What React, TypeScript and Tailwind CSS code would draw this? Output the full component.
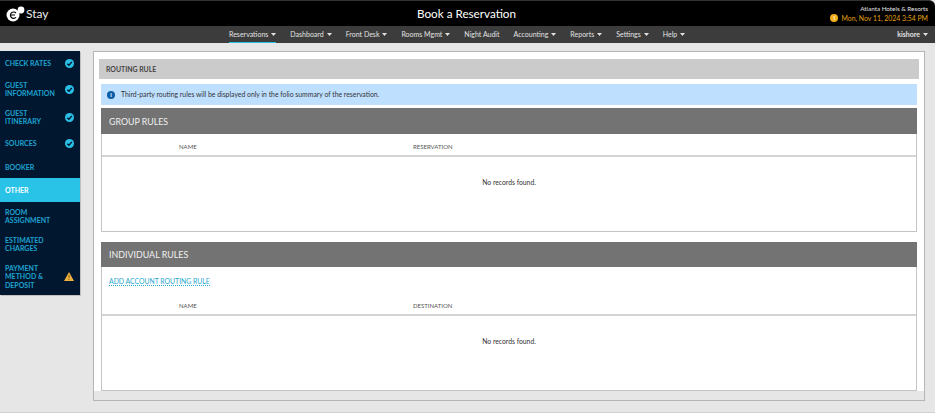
import React from 'react';

const navItems = [
    { label: 'Reservations', caret: true, active: true },
    { label: 'Dashboard', caret: true },
    { label: 'Front Desk', caret: true },
    { label: 'Rooms Mgmt', caret: true },
    { label: 'Night Audit', caret: false },
    { label: 'Accounting', caret: true },
    { label: 'Reports', caret: true },
    { label: 'Settings', caret: true },
    { label: 'Help', caret: true },
];

const sideItems = [
    { lines: ['CHECK RATES'], h: 'h-[24px]', icon: 'check' },
    { lines: ['GUEST', 'INFORMATION'], h: 'h-[28px]', icon: 'check' },
    { lines: ['GUEST', 'ITINERARY'], h: 'h-[28px]', icon: 'check' },
    { lines: ['SOURCES'], h: 'h-[24px]', icon: 'check' },
    { lines: ['BOOKER'], h: 'h-[23px] pt-[2px]' },
    { lines: ['OTHER'], h: 'h-[24px]', active: true },
    { lines: ['ROOM', 'ASSIGNMENT'], h: 'h-[28px]' },
    { lines: ['ESTIMATED', 'CHARGES'], h: 'h-[28px]' },
    { lines: ['PAYMENT', 'METHOD &', 'DEPOSIT'], h: 'h-[37px]', icon: 'warn' },
];

const Caret = () => (
    <svg width="5" height="3" viewBox="0 0 5 3" className="ml-[3px] inline-block align-middle">
        <path d="M0 0h5L2.5 3z" fill="currentColor" />
    </svg>
);

const CheckIcon = () => (
    <svg width="9" height="9" viewBox="0 0 10 10">
        <circle cx="5" cy="5" r="5" fill="#29bfe6" />
        <path d="M2.6 5.2 4.4 7l3.2-3.8" fill="none" stroke="#00152e" strokeWidth="1.5" />
    </svg>
);

const WarnIcon = () => (
    <svg width="10" height="9" viewBox="0 0 10 9">
        <path d="M5 0 10 9H0z" fill="#f0b13c" />
        <path d="M5 3v3M5 7v1" stroke="#5c4210" strokeWidth="0.8" />
    </svg>
);

const Logo = () => (
    <svg width="22" height="18" viewBox="0 0 22 18">
        <circle cx="8" cy="10" r="6.5" fill="#fff" />
        <path d="M11 8a3.2 3.2 0 1 0 0 4.4M5.5 10H10" fill="none" stroke="#000" strokeWidth="1.2" />
        <circle cx="16" cy="5" r="3.4" fill="#fff" />
    </svg>
);

const RulesTable = ({ second }: { second: string }) => (
    <div className="flex h-[23px] items-center border-b-2 border-[#d4d4d4] pt-[3px] text-[6px] text-[#555]">
        <span className="ml-[77px] w-[234px]">NAME</span>
        <span>{second}</span>
    </div>
);

export default function App() {
    return (
        <div className="flex h-[413px] w-[935px] flex-col overflow-hidden border-b border-[#cfcfcf] bg-[#e6e6e6] font-['Lato',sans-serif]">
            <header className="flex h-[26px] shrink-0 items-center rounded-tr-[6px] border-t border-[#333] bg-black pl-[5px] pr-[7px]">
                <div className="flex flex-1 items-center">
                    <Logo />
                    <span className="ml-[-1px] mt-[1px] text-[12px] text-[#ececec]">Stay</span>
                </div>
                <div className="text-[11.7px] leading-[17px] text-white">Book a Reservation</div>
                <div className="flex flex-1 flex-col items-end">
                    <span className="text-[6.3px] leading-[8px] text-[#e5e5e5]">Atlanta Hotels &amp; Resorts</span>
                    <div className="flex items-center text-[6.9px] leading-[10px] text-[#e0a010]">
                        <span className="mr-[3px] flex h-[8px] w-[8px] items-center justify-center rounded-full bg-[#f2ae1c] text-[6px] font-bold leading-none text-white">!</span>
                        Mon, Nov 11, 2024 3:54 PM
                    </div>
                </div>
            </header>

            <nav className="flex h-[17px] shrink-0 items-stretch bg-[#3c3c3c] text-[7px] text-[#e2e2e2]">
                <ul className="ml-[229px] flex items-stretch gap-[14px]">
                    {navItems.map(item => (
                        <li key={item.label} className={`flex items-center ${item.active ? 'border-b border-[#29bfe6]' : ''}`}>
                            {item.label}
                            {item.caret && <Caret />}
                        </li>
                    ))}
                </ul>
                <div className="ml-auto mr-[7px] flex items-center font-bold">
                    kishore
                    <Caret />
                </div>
            </nav>

            <div className="flex flex-1 items-start pt-[8px]">
                <aside className="h-[244px] w-[80px] shrink-0 bg-[#00172f] shadow-[1px_1px_0_#c0c0c0]">
                    {sideItems.map(item => (
                        <div
                            key={item.lines.join(' ')}
                            className={`flex ${item.h} items-center justify-between pl-[5px] pr-[6px] text-[7px] font-bold leading-[8.4px] ${item.active ? 'bg-[#29c3e8] text-white' : 'text-[#1fa3cf]'}`}
                        >
                            <span>
                                {item.lines.map(line => (
                                    <span key={line} className="block">{line}</span>
                                ))}
                            </span>
                            {item.icon === 'check' && <CheckIcon />}
                            {item.icon === 'warn' && <WarnIcon />}
                        </div>
                    ))}
                </aside>

                <main className="ml-[13px] flex h-[350px] w-[832px] flex-col border border-[#b5b5b5] bg-white">
                    <div className="mx-[5px] mt-[7px] flex h-[20px] items-center bg-[#cbcbcb] pl-[7px] text-[6.9px] font-bold text-[#444]">
                        ROUTING RULE
                    </div>
                    <div className="mx-[7px] mt-[5px] flex h-[21px] items-center bg-[#bfdfff] pl-[6px] text-[6.85px] text-[#333]">
                        <span className="mr-[6px] flex h-[8px] w-[8px] items-center justify-center rounded-full bg-[#0b5ea8] text-[6px] font-bold leading-none text-white">i</span>
                        Third-party routing rules will be displayed only in the folio summary of the reservation.
                    </div>

                    <section className="mx-[7px] mt-[3px] flex h-[124px] flex-col border border-t-0 border-[#c4c4c4]">
                        <h2 className="-mx-px flex h-[26px] items-center bg-[#737373] pl-[8px] pt-px text-[8.8px] text-[#f0f0f0]">GROUP RULES</h2>
                        <RulesTable second="RESERVATION" />
                        <div className="mt-[20px] text-center text-[6.8px] text-[#333]">No records found.</div>
                    </section>

                    <section className="mx-[7px] mt-[10px] flex h-[149px] flex-col border border-t-0 border-[#c4c4c4]">
                        <h2 className="-mx-px flex h-[25px] items-center bg-[#737373] pl-[8px] pt-px text-[8.9px] text-[#f0f0f0]">INDIVIDUAL RULES</h2>
                        <a className="ml-[7px] mt-[10px] w-fit border-b border-dotted border-[#29a9d0] text-[6.85px] leading-[8px] text-[#29a9d0]">ADD ACCOUNT ROUTING RULE</a>
                        <div className="mt-[7px]">
                            <RulesTable second="DESTINATION" />
                        </div>
                        <div className="mt-[20px] text-center text-[6.8px] text-[#333]">No records found.</div>
                    </section>
                    <div className="mt-auto h-[9px] bg-[#e6e6e6]" />
                </main>
            </div>
        </div>
    );
}
